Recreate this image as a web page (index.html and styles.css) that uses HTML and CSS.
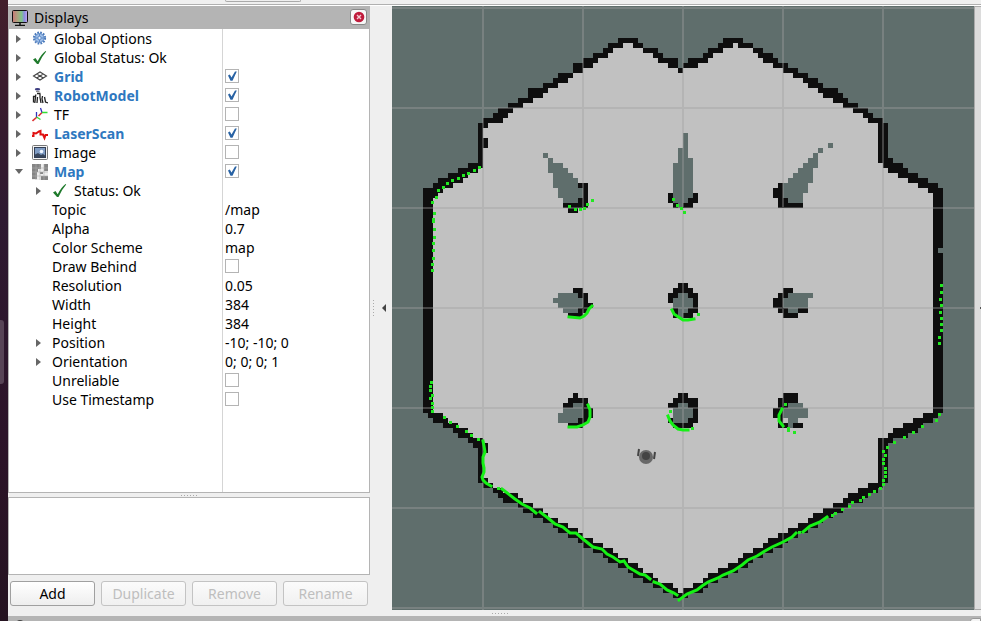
FILE: index.html
```html
<!DOCTYPE html>
<html lang="en">
<head>
<meta charset="utf-8">
<title>Displays</title>
<link rel="stylesheet" href="styles.css">
</head>
<body>
<svg class="defs" aria-hidden="true">
  <symbol id="i-check" viewBox="0 0 16 16"><path d="M1 9.500l2.500-1.500 2.200 3.200Q9 4.500 13.500 1l.700.600Q9.500 7 6.500 14H5Z" fill="#1f7a2c"/></symbol>
</svg>
<div class="app">
  <aside class="dock"><div class="dock-handle"></div></aside>
  <div class="window">
    <div class="toolbar"><div class="toolbar-tab"></div></div>
    <main class="work">
      <section class="panel">
        <header class="title">
          <svg class="icon" viewBox="0 0 16 16"><defs><linearGradient id="scr"><stop offset="0" stop-color="#c77"/><stop offset=".35" stop-color="#aaa580"/><stop offset=".6" stop-color="#7fc48a"/><stop offset=".8" stop-color="#8c8fe0"/><stop offset="1" stop-color="#c9a6ee"/></linearGradient></defs><rect x=".5" y=".5" width="15" height="12" rx="1" fill="url(#scr)" stroke="#111"/><path d="M8 13v2M3 15.500h10" stroke="#111" stroke-width="1.500"/></svg>
          <h1>Displays</h1>
          <button class="close" type="button" aria-label="Close"><svg viewBox="0 0 12 12"><circle cx="6" cy="6" r="5.300" fill="#c01c3c"/><path d="M4 4l4 4M8 4l-4 4" stroke="#f3c9d1" stroke-width="1.400"/></svg></button>
        </header>
        <div class="tree">
          <table>
            <tbody>
              <tr><td><div class="item"><button class="toggle" aria-label="Expand"></button><svg class="icon" viewBox="0 0 16 16"><circle cx="7.500" cy="7" r="5.500" fill="none" stroke="#4b7abb" stroke-width="2.200" stroke-dasharray="1.700 1.180"/><circle cx="7.500" cy="7" r="4.500" fill="#9dbde8" stroke="#5a88c6"/><circle cx="7.500" cy="7" r="1.700" fill="#e8f0fa" stroke="#5a88c6"/><path d="M7.500 3v2M7.500 9v2M3.500 7h2M9.500 7h2" stroke="#5a88c6"/></svg><span>Global Options</span></div></td><td></td></tr>
              <tr><td><div class="item"><button class="toggle" aria-label="Expand"></button><svg class="icon"><use href="#i-check"/></svg><span>Global Status: Ok</span></div></td><td></td></tr>
              <tr><td><div class="item"><button class="toggle" aria-label="Expand"></button><svg class="icon" viewBox="0 0 16 16"><path d="M1.500 7L8 3l6.500 4L8 11ZM4.700 5l6.600 4M11.300 5l-6.600 4" fill="none" stroke="#444" stroke-width="1.100"/></svg><label class="on" for="c1">Grid</label></div></td><td><input type="checkbox" id="c1" checked></td></tr>
              <tr><td><div class="item"><button class="toggle" aria-label="Expand"></button><svg class="icon" viewBox="0 0 16 16"><ellipse cx="5.500" cy="1.300" rx="2.700" ry="1.300" fill="#3d3d80"/><path d="M4 3.500h3.500" stroke="#888" stroke-width="1.200"/><path d="M1 8.500h2.500M1.500 8v6.500M3.800 6.500l-1 8.500M5 5.500h3.500M5.500 9l-.500 6M8 6v3.500l1 5.500M10.500 8l-.500 3 1 4M12.500 9l1 5 2.500 1" fill="none" stroke="#222" stroke-width="1.300"/></svg><label class="on" for="c2">RobotModel</label></div></td><td><input type="checkbox" id="c2" checked></td></tr>
              <tr><td><div class="item"><button class="toggle" aria-label="Expand"></button><svg class="icon" viewBox="0 0 16 16"><path d="M5 10l-4.500 4M10 5.500L6.500 9" stroke="#d33" stroke-width="1.600"/><path d="M4.500 10V5M10 5.500L8.500 1" stroke="#33b" stroke-width="1.300"/><path d="M10 5.500h5.500M4.500 10l4 2.500" stroke="#3d3" stroke-width="1.400"/></svg><label for="c3">TF</label></div></td><td><input type="checkbox" id="c3"></td></tr>
              <tr><td><div class="item"><button class="toggle" aria-label="Expand"></button><svg class="icon" viewBox="0 0 16 16"><path d="M0 10h1.500V7L4 7.500 7 5.500 8.500 5v3.500H11L12.500 12l1-3H16" fill="none" stroke="#e01010" stroke-width="2"/></svg><label class="on" for="c4">LaserScan</label></div></td><td><input type="checkbox" id="c4" checked></td></tr>
              <tr><td><div class="item"><button class="toggle" aria-label="Expand"></button><svg class="icon" viewBox="0 0 16 16"><rect x=".5" y=".5" width="15" height="14" rx="1" fill="#f4f4f4" stroke="#777"/><rect x="2.500" y="2.500" width="11" height="10" fill="#7f9cc4" stroke="#333f55"/><path d="M3 12V9.500l3-1.500L9 10l2-1 2 1.500V12Z" fill="#38465c"/><circle cx="9.500" cy="6.500" r="1.800" fill="#eef5ff"/></svg><label for="c5">Image</label></div></td><td><input type="checkbox" id="c5"></td></tr>
              <tr><td><div class="item"><button class="toggle open" aria-label="Collapse"></button><svg class="icon" viewBox="0 0 16 16"><path fill="#eee" d="M0 0h16v16H0z"/><path d="M0 0h9v5H6v3H5v7H0zM12 0h4v7h-4zM9 12h7v4H9zM8 8h3v2H8z" fill="#858585"/><path d="M0 4h16M0 8h16M0 12h16M4 0v16M8 0v16M12 0v16" stroke="#b0b0b0" stroke-width=".6"/></svg><label class="on" for="c6">Map</label></div></td><td><input type="checkbox" id="c6" checked></td></tr>
              <tr><td><div class="item sub"><button class="toggle" aria-label="Expand"></button><svg class="icon"><use href="#i-check"/></svg><span>Status: Ok</span></div></td><td></td></tr>
              <tr><td><div class="item leaf">Topic</div></td><td>/map</td></tr>
              <tr><td><div class="item leaf">Alpha</div></td><td>0.7</td></tr>
              <tr><td><div class="item leaf">Color Scheme</div></td><td>map</td></tr>
              <tr><td><div class="item leaf"><label for="c7">Draw Behind</label></div></td><td><input type="checkbox" id="c7"></td></tr>
              <tr><td><div class="item leaf">Resolution</div></td><td>0.05</td></tr>
              <tr><td><div class="item leaf">Width</div></td><td>384</td></tr>
              <tr><td><div class="item leaf">Height</div></td><td>384</td></tr>
              <tr><td><div class="item sub"><button class="toggle" aria-label="Expand"></button><span>Position</span></div></td><td>-10; -10; 0</td></tr>
              <tr><td><div class="item sub"><button class="toggle" aria-label="Expand"></button><span>Orientation</span></div></td><td>0; 0; 0; 1</td></tr>
              <tr><td><div class="item leaf"><label for="c8">Unreliable</label></div></td><td><input type="checkbox" id="c8"></td></tr>
              <tr><td><div class="item leaf"><label for="c9">Use Timestamp</label></div></td><td><input type="checkbox" id="c9"></td></tr>
            </tbody>
          </table>
        </div>
        <div class="split-h"><i class="dots"></i></div>
        <div class="help"></div>
        <div class="actions">
          <button type="button">Add</button>
          <button type="button" disabled>Duplicate</button>
          <button type="button" disabled>Remove</button>
          <button type="button" disabled>Rename</button>
        </div>
      </section>
      <div class="split-v"><i class="dots vertical"></i><button class="collapse" aria-label="Collapse panel"></button></div>
      <svg class="map" id="map" viewBox="392 6 582 604" preserveAspectRatio="xMidYMid slice" role="img" aria-label="Map view">
        <g transform="translate(393 10.500) scale(5)" fill="none" shape-rendering="crispEdges">
          <path id="free" stroke="#c1c1c1"/>
          <path id="unknown" stroke="#5f6e6c"/>
          <path id="wall" stroke="#0e0e0e"/>
        </g>
        <path d="M483 6v604M583 6v604M683 6v604M783 6v604M883 6v604M392 8h582M392 108h582M392 208h582M392 308h582M392 408h582M392 508h582M392 608h582" stroke="#a0a0a0" stroke-opacity=".38" stroke-width="2"/>
        <path id="dense" fill="none" stroke="#16f016" stroke-width="3" stroke-linecap="square"/>
        <path id="dots" fill="none" stroke="#22e822" stroke-width="3" shape-rendering="crispEdges"/>
        <g><circle cx="646" cy="457" r="7" fill="#686868"/><circle cx="646" cy="456" r="4" fill="#444"/><path d="M639 449l-1 7M655 452l-1 7" stroke="#444" stroke-width="2"/></g>
      </svg>
      <aside class="side"><i class="side-arrow"></i></aside>
    </main>
    <div class="split-h bottom"><i class="dots"></i></div>
    <footer class="timebar"><i class="clock"></i><i class="timebar-button"></i></footer>
  </div>
</div>
<script src="map.js"></script>
</body>
</html>
```
FILE: styles.css
```css
* { box-sizing: border-box; }
body { margin: 0; background: #efefef; color: #000; font: 14px/19px "Noto Sans", "Open Sans", sans-serif; }
button { padding: 0; border: 0; background: none; font: inherit; color: inherit; }
.defs { display: none; }
.app { display: flex; height: 100vh; overflow: hidden; }
.dock { display: flex; align-items: center; flex: 0 0 8px; padding-top: 83px; background: linear-gradient(#431f2c, #2e1a31 35%, #2c1429 70%, #251321); }
.dock-handle { width: 4px; height: 64px; border-radius: 0 3px 3px 0; background: #574456; }
.window { display: flex; flex: 1; flex-direction: column; min-width: 0; }
.toolbar { flex: 0 0 6px; padding-left: 217px; border-bottom: 1px solid #fff; box-shadow: inset 0 -1px #b0b0b0; }
.toolbar-tab { width: 76px; height: 2px; border: 1px solid #aaa; border-top: 0; border-radius: 0 0 3px 3px; }
.work { display: flex; flex: 1; min-height: 0; }
.panel { display: flex; flex: 0 0 362px; flex-direction: column; padding-bottom: 4px; }
.title { display: flex; align-items: center; gap: 6px; height: 23px; flex: none; padding: 0 3px 0 4px; background: #b4b4b4; }
.title h1 { flex: 1; margin: 0; font-size: 14px; font-weight: 400; }
.icon { width: 16px; height: 16px; flex: none; }
.close { display: grid; place-items: center; width: 17px; height: 16px; margin-bottom: 2px; border: 1px solid #888; border-radius: 3px; background: #f7f7f7; }
.close svg { width: 12px; height: 12px; }
.tree { flex: 1; min-height: 0; border: 1px solid #b4b4b4; border-top: 0; background: linear-gradient(#d5d5d5, #d5d5d5) 213px 0 / 1px 100% no-repeat #fff; }
table { width: 100%; table-layout: fixed; border-collapse: collapse; }
td { height: 19px; padding: 0; }
td:first-child { width: 214px; }
td:last-child { padding-left: 2px; }
.item { display: flex; align-items: center; height: 19px; white-space: nowrap; }
.item .icon { margin-right: 6px; }
.sub { padding-left: 20px; }
.leaf { padding-left: 43px; }
.on { color: #2e78c0; font-weight: 700; }
.toggle { display: grid; place-items: center; width: 19px; height: 19px; margin-right: 4px; }
.toggle::before { content: ""; border: solid transparent; border-width: 4px 0 4px 5px; border-left-color: #666; }
.toggle.open::before { border-width: 5px 4px 0; border-top-color: #666; border-left-color: transparent; }
input[type="checkbox"] { display: grid; place-items: center; appearance: none; width: 14px; height: 14px; margin: 0 0 1px; border: 1px solid #b4b4b4; background: #fff; }
input:checked::before { content: ""; width: 10px; height: 10px; background: #2862a4; clip-path: polygon(10% 45%, 28% 36%, 45% 65%, 80% 5%, 98% 5%, 55% 98%, 35% 98%); }
.split-h { display: grid; flex: 0 0 4px; place-items: center; }
.dots { width: 17px; height: 1px; background: repeating-linear-gradient(90deg, #aaa 0 1px, transparent 1px 3px); }
.dots.vertical { width: 1px; height: 17px; background: repeating-linear-gradient(#aaa 0 1px, transparent 1px 3px); }
.help { flex: 0 0 78px; border: 1px solid #b4b4b4; background: #fff; }
.actions { display: grid; flex: none; grid-template-columns: repeat(4, 1fr); gap: 6px; padding: 6px 2px 0; }
.actions button { height: 25px; border: 1px solid #a0a0a0; border-radius: 3px; background: linear-gradient(#fff, #eee); }
.actions button:disabled { border-color: #c3c3c3; color: #bebebe; background: linear-gradient(#fbfbfb, #f0f0f0); }
.split-v { display: flex; flex: 0 0 22px; align-items: center; justify-content: space-between; padding: 0 6px 0 3px; }
.collapse::before { content: ""; display: block; border: solid transparent; border-width: 4px 4px 4px 0; border-right-color: #444; }
.map { flex: 1; min-width: 0; height: 100%; background: #5f6e6c; }
.side { display: flex; flex: 0 0 7px; align-items: center; justify-content: flex-end; border: 1px solid #aaa; border-width: 1px 0 1px 1px; background: #dcdcdc; }
.side-arrow { width: 1px; height: 2px; background: #555; }
.bottom { flex-basis: 6px; padding-left: 11px; }
.timebar { display: flex; flex: 0 0 5px; justify-content: space-between; padding-left: 7px; background: #b4b4b4; overflow: hidden; }
.clock { width: 10px; height: 10px; margin-top: 4px; border-radius: 50%; background: #444; }
.timebar-button { width: 11px; height: 10px; margin-top: 2px; border: 1px solid #999; border-radius: 3px 0 0; background: #f5f5f5; }
```
FILE: map.js
```js
// Horizontal runs of occupancy cells: [row, startCol, endCol, startCol, endCol, ...]
const outer = [
  [6,45,49,66,70],[7,43,46,48,50,65,68,69,72],[8,42,44,50,53,63,66,72,74],[9,40,43,52,54,62,64,73,76],
  [10,38,41,53,57,59,63,74,77],[11,36,40,55,57,58,61,76,79],[12,36,38,57,58,78,81],[13,33,36,80,83],
  [14,32,35,82,85],[15,30,33,83,86],[16,27,31,85,89],[17,27,30,86,90],[18,25,28,88,91],[19,23,26,90,93],
  [20,21,24,92,95],[21,20,23,94,96],[22,18,22,95,98],[23,17,19,97,99],[24,17,18,97,99],[25,17,18,97,99],
  [26,17,19,97,99],[27,17,19,97,99],[28,17,18,97,99],[29,17,18,97,99],[30,17,18,97,100],[31,15,18,98,102],
  [32,13,17,99,103],[33,11,15,101,105],[34,9,14,103,107],[35,8,12,105,109],[36,6,10,107,110],[37,6,9,108,110],
  [81,7,10,106,109],[82,8,11,104,108],[83,10,13,102,106],[84,12,15,100,105],[85,13,16,99,103],[86,15,18,97,100],
  [87,16,19,97,99],[88,17,19,97,99],[89,17,18,97,99],[90,17,18,97,99],[91,17,18,97,99],[92,17,18,97,99],
  [93,17,18,97,99],[94,17,19,97,99],[95,18,20,95,98],[96,20,22,93,97],[97,21,25,91,95],[98,22,26,90,94],
  [99,25,28,88,91],[100,26,30,86,90],[101,28,31,84,88],[102,30,33,83,86],[103,32,35,81,85],[104,33,37,79,83],
  [105,35,38,77,81],[106,37,40,75,79],[107,38,42,74,78],[108,40,44,72,76],[109,42,45,70,74],[110,43,47,69,72],
  [111,45,49,67,71],[112,47,50,65,69],[113,48,52,63,67],[114,50,53,62,65],[115,52,56,60,63],[116,54,57,58,62],[117,56,59]
];
for (let r = 38; r <= 80; r++) outer.push([r,6,8,108,110]);

const pillars = [
  [35,37,39,77,78],[36,38,39,76,78],[37,38,39,55,56,60,61,76,78],[38,37,39,55,56,59,61,77,79],[39,34,39,56,57,58,60,77,82],[40,35,37],
  [55,57,59],[56,36,38,56,60,78,80],[57,37,39,55,57,59,61,77,79],[58,38,39,55,56,60,61,76,78],[59,38,40,60,61,76,78],
  [60,37,39,56,57,59,61,77,79,81,83],[61,35,38,56,57,58,60,78,81],
  [77,36,37,57,59,78,81],[78,35,39,56,61,77,81],[79,34,36,38,39,55,57,59,61,77,79],[80,38,40,60,61,76,78],
  [81,38,40,60,61,76,78],[82,37,39,55,56,59,61,77,78],[83,35,38,56,60,77,79,80,82]
];
const shadows = [
  [25,58,59],[26,58,59],[27,58,59,87,88],[28,57,59,85,86],[29,30,31,57,59,84,85],[30,31,32,57,60,83,85],
  [31,31,34,56,60,82,85],[32,31,35,56,60,81,84],[33,32,36,56,60,80,84],[34,32,37,56,60,79,84],[35,32,37,56,60,78,83],
  [36,33,38,56,60,78,83],[37,33,38,56,60,78,82],[38,34,37,56,59,79,82],[39,57,58],
  [57,33,37,57,59,79,84],[58,32,38,56,60,78,83],[59,33,38,56,60,78,83],[60,34,37,57,59,79,81],[61,57,58],
  [79,36,38,57,59,79,82],[80,34,38,56,60,78,83],[81,33,38,56,60,78,83],[82,33,37,56,59,79,81],[83,79,80],[48,109,110]
];
const runs = rows => rows.map(([r, ...c]) => {
  let d = "";
  for (let i = 0; i < c.length; i += 2) d += `M${c[i]} ${r}h${c[i + 1] - c[i]}`;
  return d;
}).join("");

// Free space spans each row between its outermost wall cells, with the notch between the two peaks left out.
const free = outer.map(([r, ...c]) => {
  if (r < 7) return [r, ...c];
  if (r < 12) {
    const right = c.findIndex((v, i) => i % 2 === 0 && v >= 58);
    return [r, c[0], c[right - 1], c[right], c[c.length - 1]];
  }
  return [r, c[0], c[c.length - 1]];
});
const set = (id, d) => document.getElementById(id).setAttribute("d", d);
set("free", runs(free));
set("unknown", runs(shadows));
set("wall", runs(outer.concat(pillars).filter(r => r[0] !== 48)) + "M6 48h2M108 48h1");

// Laser returns: connected stretches and isolated hits.
const lines = [
  "483,441 484,446 485,452 483,457 483,463 484,468 484,472 482,477 483,480 486,483 491,486",
  "502,489 515,499 522,504 530,508 536,513",
  "540,512 548,518 555,524 563,527 570,533 576,533 583,539 593,547 602,549 607,554 613,557 620,562 624,561 628,567 640,574 645,575 650,579",
  "654,582 660,584 667,590 674,593 677,595",
  "679,600 687,594 697,590 702,586 708,582 718,578 723,575 733,571 742,565 748,560 757,556 765,551 772,547 783,542 792,537 796,533",
  "803,532 810,526 820,522 827,517",
  "569,317 580,318 584,316 587,313 589,309 592,306",
  "672,310 674,314 680,318 683,320 688,320 694,319",
  "569,427 577,427 583,425 588,422 590,417 590,410 588,405",
  "668,416 670,421 673,425 678,429 683,430 688,430",
  "782,409 779,415 779,421 783,426"
];
set("dense", lines.map(l => "M" + l.split(" ").join("L")).join(""));
const hits = `479,167 474,170 468,173 463,175 458,178 452,180 447,183 443,187 438,190 436,197 432,202 434,213 433,219
433,221 434,229 434,237 433,243 433,250 433,258 432,264 432,270 431,382 430,386 430,390 432,395 430,398 432,403 432,407 432,411
444,417 450,422 457,426 466,431 471,435 478,439 498,488 832,515 835,513 842,509 849,506 852,502 860,500 863,497 869,494 874,491
880,488 883,484 883,480 885,476 885,472 885,468 883,463 883,459 885,455 883,451 887,447 894,442 904,437 913,432 922,426 936,420 939,414
941,285 941,292 940,299 941,305 940,312 941,318 941,324 941,330 939,337 939,343 569,206 575,209 580,209 584,208 587,204 592,200
673,199 677,205 681,208 684,212 698,314 670,411 692,428 785,404 788,428 788,430 794,432 799,532`;
set("dots", hits.split(/\s+/).map(p => { const [x, y] = p.split(","); return `M${x - 1} ${y}h3`; }).join(""));
```
